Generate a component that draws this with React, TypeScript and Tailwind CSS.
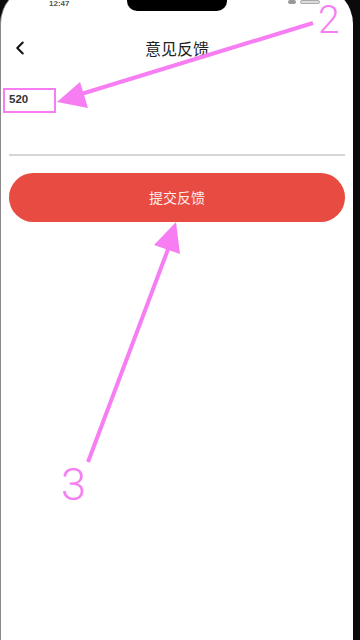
import { ChevronLeft } from 'lucide-react'

const PINK = '#f67ef2'

// Pink hand-drawn style markers laid over the screenshot
function Annotations() {
  return (
    <>
      <svg
        className="pointer-events-none absolute left-0 top-0"
        width="360"
        height="640"
        viewBox="0 0 360 640"
      >
        <line x1="313" y1="23" x2="78" y2="95" stroke={PINK} strokeWidth={4} />
        <polygon points="57,102 80,82 88,108" fill={PINK} />
        <line x1="88" y1="462" x2="170" y2="244" stroke={PINK} strokeWidth={4} />
        <polygon points="176,222 154,245 180,254" fill={PINK} />
      </svg>
      <div className="pointer-events-none absolute left-[3px] top-[88px] h-[25px] w-[53px] border-2 border-[#f67ef2]" />
      <span className="absolute left-[318px] top-[1px] font-['Roboto',sans-serif] text-[39px] font-light leading-none text-[#f67ef2]">
        2
      </span>
      <span className="absolute left-[61px] top-[462px] font-['Roboto',sans-serif] text-[45px] font-light leading-none text-[#f67ef2]">
        3
      </span>
    </>
  )
}

export default function App() {
  return (
    <div className="relative flex h-[640px] w-[360px] overflow-hidden bg-[#0b0b0b] font-['Noto_Sans_CJK_SC','Noto_Sans',sans-serif]">
      <div className="mt-[-14px] flex w-[353px] flex-col rounded-t-[38px] border-l border-[#8a8a8a] bg-white">
        {/* status bar, mostly cut off by the top edge */}
        <div className="relative h-[46px] shrink-0">
          <span className="absolute left-[48px] top-[14px] font-['Liberation_Sans',sans-serif] text-[8px] font-bold leading-none text-[#555]">
            12:47
          </span>
          <div className="absolute left-[287px] top-[14px] flex gap-1">
            <span className="h-[4px] w-[8px] rounded-sm bg-[#999]" />
            <span className="h-[4px] w-[20px] rounded-sm border border-[#aaa] bg-[#ddd]" />
          </div>
        </div>

        {/* header */}
        <div className="grid h-[32px] shrink-0 grid-cols-[1fr_auto_1fr] items-center">
          <ChevronLeft size={22} strokeWidth={2.2} className="ml-[8px] text-[#111]" />
          <h1 className="text-[16px] text-[#222]">意见反馈</h1>
          <span />
        </div>

        {/* input */}
        <div className="mt-[24px] flex h-[24px] shrink-0 items-center px-[8px] font-['Liberation_Sans',sans-serif] text-[11.5px] font-semibold text-[#333]">
          520
        </div>
        <div className="mx-[8px] mt-[42px] h-[1.5px] shrink-0 bg-[#d5d5d5]" />

        <button
          type="button"
          className="mx-[8px] mt-[17px] h-[49px] shrink-0 rounded-full bg-[#e84b41] text-[14px] text-[#fdeeee]"
        >
          提交反馈
        </button>
      </div>

      {/* notch */}
      <div className="absolute left-[127px] top-0 h-[11px] w-[100px] rounded-b-[10px] bg-black" />

      <Annotations />
    </div>
  )
}
